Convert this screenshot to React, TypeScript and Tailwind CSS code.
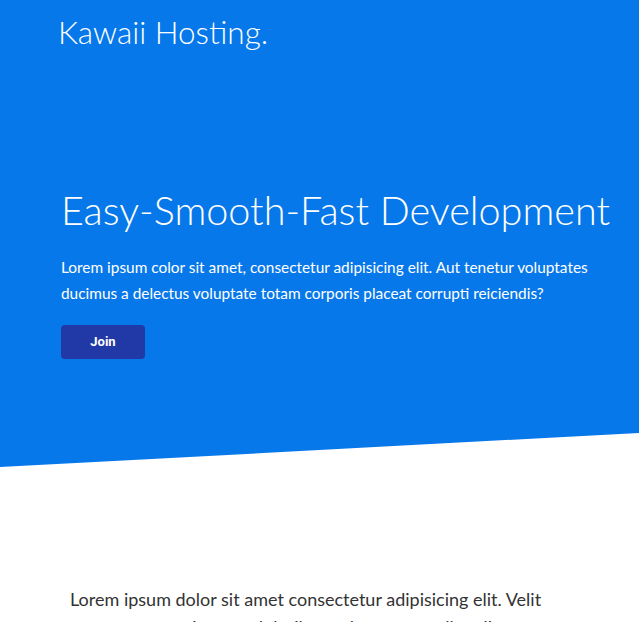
export default function App() {
  return (
    <main className="w-full min-h-screen bg-white font-['Lato',sans-serif]">
      {/* Hero */}
      <section className="bg-[#0778ea] text-white [clip-path:polygon(0_0,100%_0,100%_433px,0_467px)] h-[467px]">
        <header className="px-[58px] pt-[12px]">
          <h1 className="text-[31.5px] font-light leading-[40px]">Kawaii Hosting.</h1>
        </header>

        <div className="pl-[61px] pr-[20px] pt-[134px]">
          <h2 className="text-[39.6px] font-light leading-[48px] whitespace-nowrap">Easy-Smooth-Fast Development</h2>
          <p className="mt-[20px] text-[15.4px] leading-[26px]">
            Lorem ipsum color sit amet, consectetur adipisicing elit. Aut tenetur voluptates ducimus a
            delectus voluptate totam corporis placeat corrupti reiciendis?
          </p>
          <button className="mt-[19px] w-[84px] h-[34px] rounded bg-[#2039a6] text-[13px] font-bold font-['Roboto',sans-serif]">
            Join
          </button>
        </div>
      </section>

      {/* About */}
      <section className="px-[70px] pt-[118px]">
        <p className="text-[18px] leading-[28px] text-[#333] max-w-[500px]">
          Lorem ipsum dolor sit amet consectetur adipisicing elit. Velit consequatur quisquam
          doloribus voluptatum nulla odio distinctio sequi officiis.
        </p>
      </section>
    </main>
  );
}
